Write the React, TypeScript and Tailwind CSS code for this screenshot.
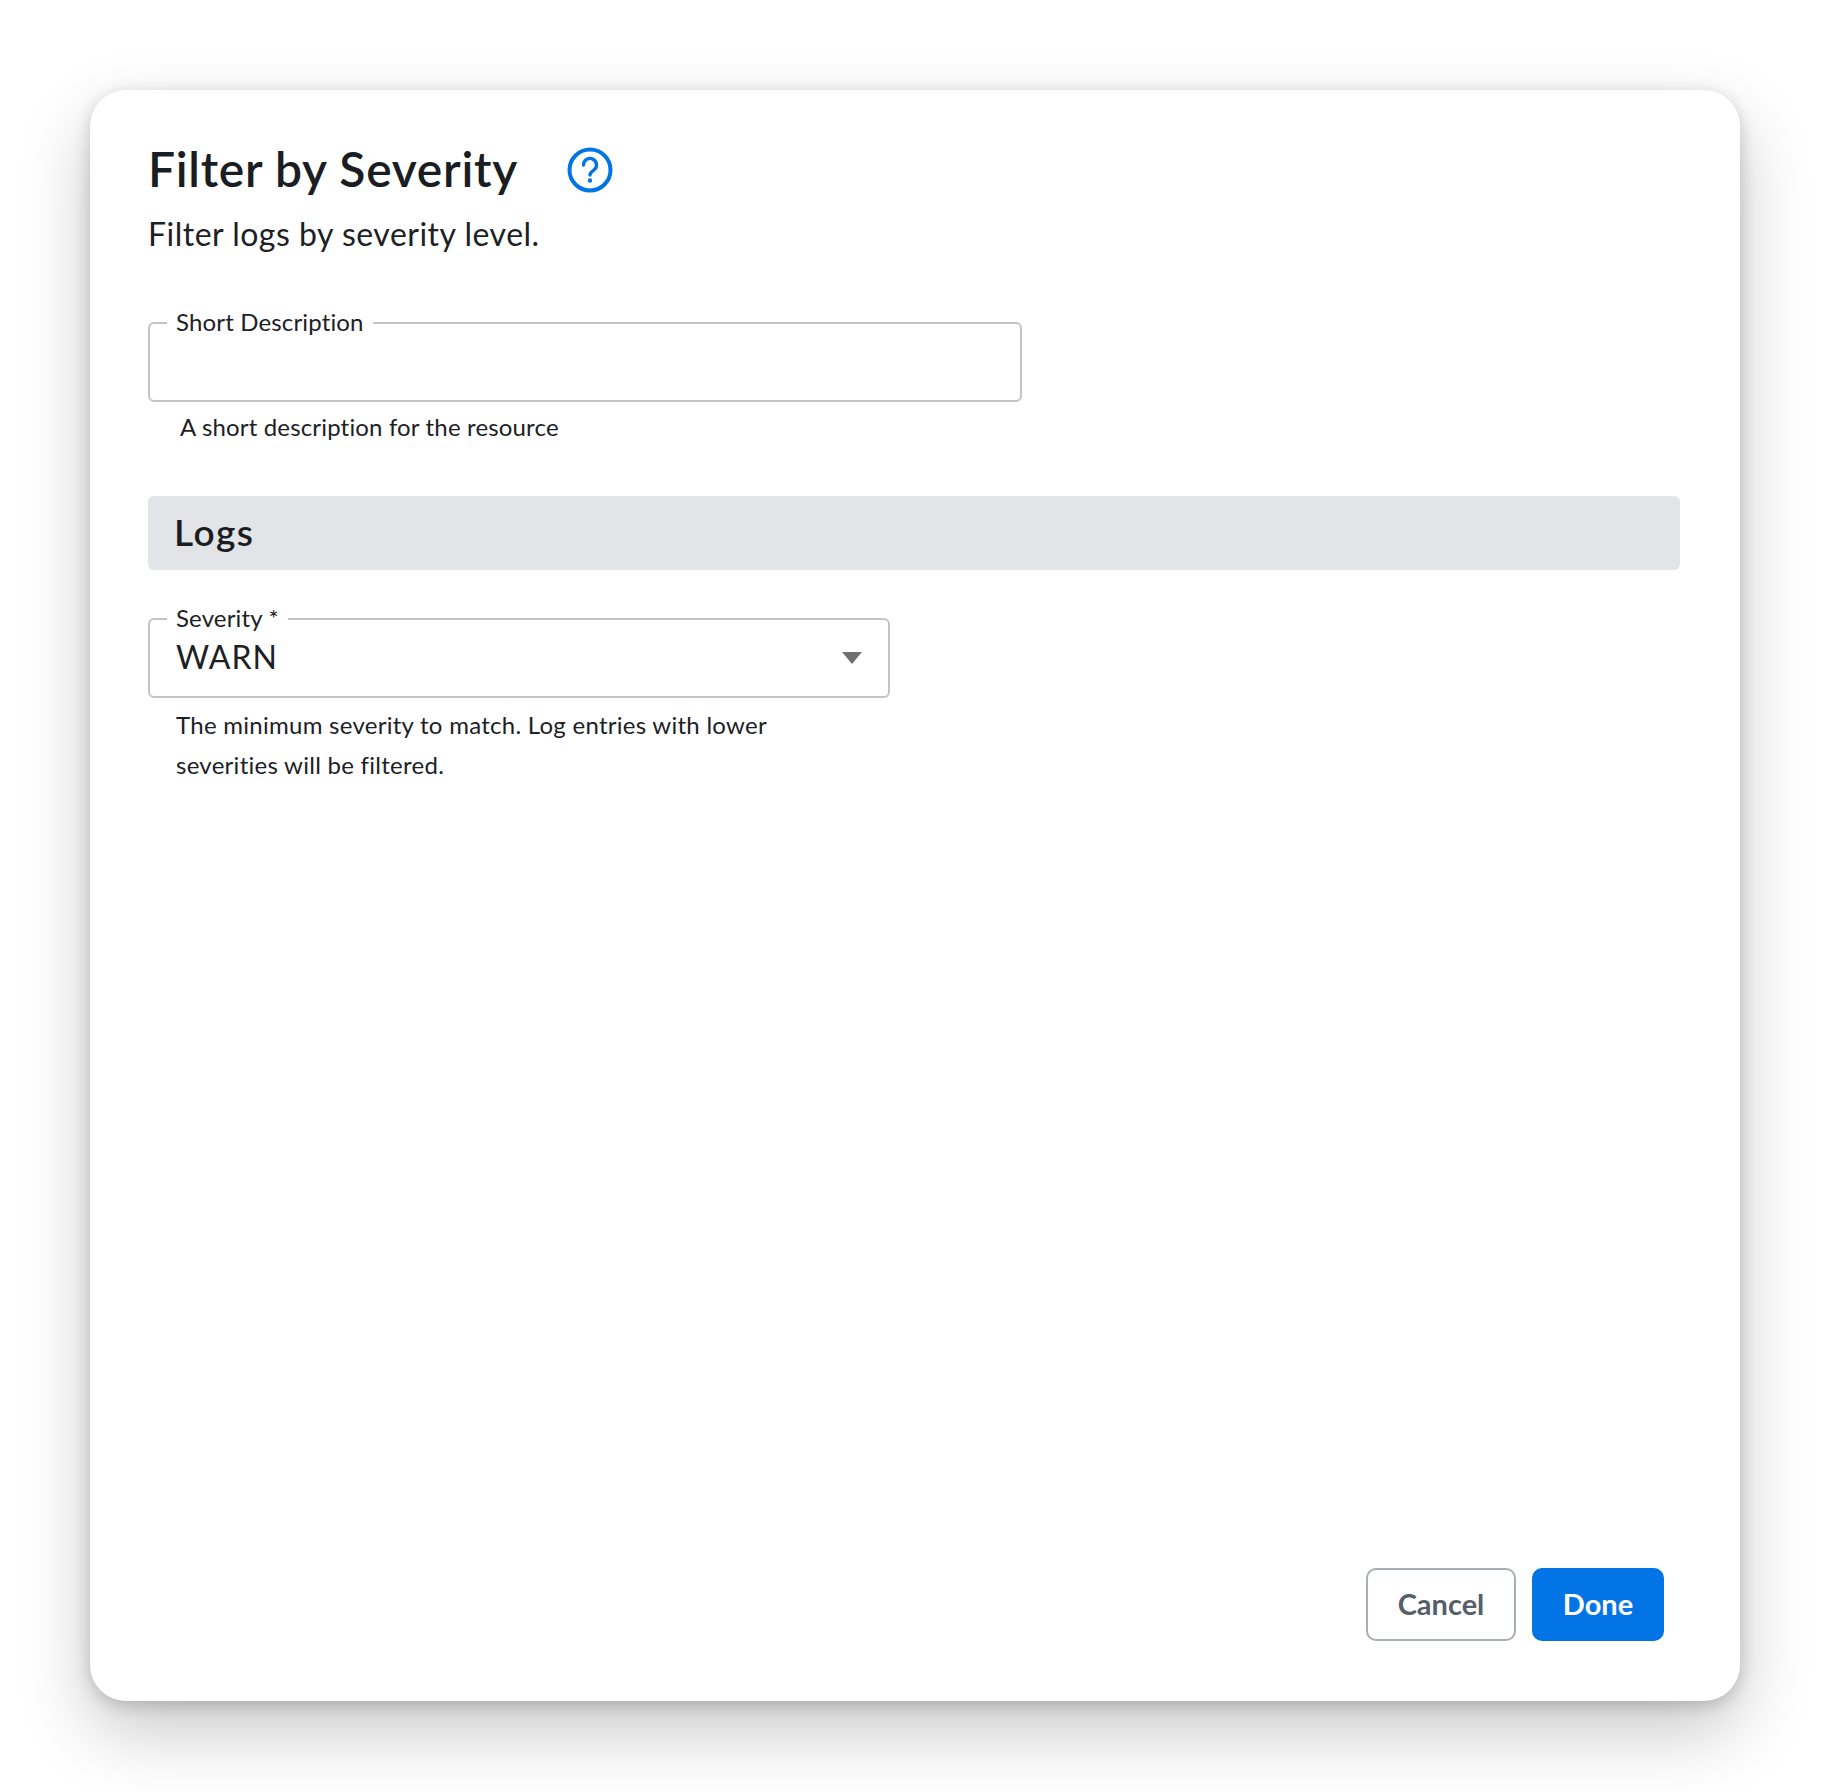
import React from "react"

const font = { fontFamily: '"Lato", "Noto Sans", sans-serif' }

const Field = ({ label, width, children }: { label: string, width: string, children?: React.ReactNode }) => (
	<fieldset className={`${width} h-[91px] border-2 border-[#c4c4c4] rounded-[6px] pl-[17px] pr-[26px] box-border`}>
		<legend className="px-[9px] pb-[2px] text-[24px] leading-[22px] tracking-[0.15px] text-[#1d2126]">{label}</legend>
		{children}
	</fieldset>
)

export default function App() {
	return (
		<div className="h-[1792px] bg-white pt-[90px] pb-[91px] pl-[90px] pr-[90px]" style={font}>
			<div className="h-full rounded-[36px] bg-white shadow-[0_30px_70px_rgba(0,0,0,0.22),0_4px_16px_rgba(0,0,0,0.18)] pt-[46px] pl-[58px] pr-[60px] pb-[60px] flex flex-col">
				<div className="flex items-center h-[68px]">
					<h1 className="pb-[2px] text-[48px] leading-[68px] font-semibold tracking-[0.7px] text-[#1a1d21]">Filter by Severity</h1>
					<svg className="ml-[49px]" width="46" height="46" viewBox="0 0 46 46" fill="none" stroke="#0274e6" strokeWidth="4" strokeLinecap="round" strokeLinejoin="round">
						<circle cx="23" cy="23" r="20.5" />
						<path d="M16.5 18a6.5 6.5 0 1 1 10 5.4c-2 1.3-3.5 2.4-3.5 4.6" strokeWidth="3.4" />
						<circle cx="23" cy="33.5" r="1" strokeWidth="2.4" />
					</svg>
				</div>
				<p className="mt-[8px] text-[32px] leading-[44px] tracking-[0.5px] text-[#1d2126]">Filter logs by severity level.</p>

				<div className="mt-[55px]">
					<Field label="Short Description" width="w-[874px]" />
					<p className="mt-[11px] pl-[32px] text-[24px] leading-[28px] tracking-[0.16px] text-[#1d2126]">A short description for the resource</p>
				</div>

				<div className="mt-[55px] h-[74px] rounded-[6px] bg-[#e3e4e8] pl-[26px] pb-[2px] flex items-center">
					<h2 className="text-[37px] font-semibold tracking-[1.5px] text-[#1a1d21]">Logs</h2>
				</div>

				<div className="mt-[37px]">
					<Field label="Severity *" width="w-[742px]">
						<div className="flex items-center justify-between h-[52px]">
							<span className="pl-[9px] text-[32px] leading-[44px] tracking-[1px] text-[#1d2126]">WARN</span>
							<svg className="mt-[2px]" width="20" height="12" viewBox="0 0 20 12"><path d="M0 0h20L10 12z" fill="#6f6f6f" /></svg>
						</div>
					</Field>
					<p className="mt-[7px] pl-[28px] w-[640px] text-[24px] leading-[40px] tracking-[0.27px] text-[#1d2126]">The minimum severity to match. Log entries with lower severities will be filtered.</p>
				</div>

				<div className="mt-auto flex justify-end gap-[16px] pr-[16px]">
					<button className="w-[150px] h-[73px] pb-[2px] rounded-[10px] border-2 border-[#a9adb5] text-[29px] font-bold text-[#565e6c]">Cancel</button>
					<button className="w-[132px] h-[73px] pb-[2px] rounded-[10px] bg-[#0274e6] text-[29px] font-bold text-white">Done</button>
				</div>
			</div>
		</div>
	)
}
